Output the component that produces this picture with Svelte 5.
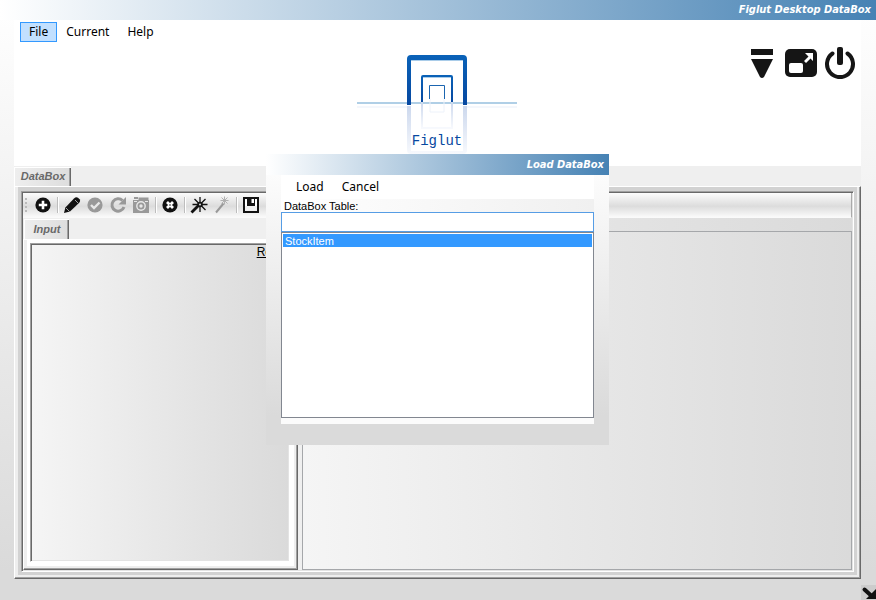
<script>
  let tableName = $state('');
  const tables = ['StockItem'];
</script>

{#snippet glyph(name)}
  <svg width="18" height="18" viewBox="0 0 18 18" aria-hidden="true">
    {#if name === 'Add'}
      <circle cx="9" cy="9" r="7.6" /><path d="M9 4.8v8.4M4.8 9h8.4" stroke="#fff" stroke-width="2.6" />
    {:else if name === 'Edit'}
      <path d="M1 17l1.400-5.400L11 2.600q2-2 4-.8l1.800 1.800q1 1.600-.6 3.200L7 15.500z" /><path d="M3 12l3.500 3.500M12 4l3 3" stroke="#ddd" stroke-width=".7" />
    {:else if name === 'Accept'}
      <circle cx="9" cy="9" r="7.600" /><path d="M5 9l3 3 5.500-5.500" stroke="#e8e8e8" stroke-width="2.400" fill="none" />
    {:else if name === 'Refresh'}
      <path d="M13.500 4.500A6.200 6.200 0 1 0 15 11" stroke="#999" stroke-width="3" fill="none" /><path d="M17 1v7.500H9.500z" />
    {:else if name === 'Snapshot'}
      <path d="M1 4h16v13H1zM2 1h4v2H2zM6.500 1.500h10V4h-10z" /><path d="M2 5.500h3M13 5.500h3" stroke="#e8e8e8" /><circle cx="9" cy="10" r="4.200" fill="none" stroke="#e8e8e8" stroke-width="1.400" /><circle cx="9" cy="10" r="1.700" fill="#e8e8e8" />
    {:else if name === 'Delete'}
      <circle cx="9" cy="9" r="7.600" /><path d="M6 6l6 6M12 6l-6 6" stroke="#fff" stroke-width="2.800" /><circle cx="9" cy="9" r=".8" />
    {:else if name === 'Magic'}
      <path d="M1.500 16.500L9 9" stroke="#111" stroke-width="2.800" /><path d="M10 1v15M2.500 8.500h15M4.500 3l11 11M15.500 3L9 9.500" stroke="#111" stroke-width="1.300" /><circle cx="10" cy="8.500" r="2.800" /><circle cx="10" cy="8.500" r="1" fill="#ddd" />
    {:else if name === 'Wand'}
      <path d="M3 16.500L10.500 7.500" stroke="#999" stroke-width="2" /><path d="M11.500 .5v8M7.500 4.500h8M8.500 1.500l6 6M14.500 1.500l-6 6" stroke="#aaa" stroke-width=".9" />
    {:else}
      <path d="M1 1h16v16H1z" /><path d="M3 3h2v7h8V3h2v12H3z" fill="#fff" /><path d="M3 10h12v5H3z" fill="#eee" /><path d="M5 1h8v8H5z" /><path d="M9.500 3H12v4H9.500z" fill="#fff" />
    {/if}
  </svg>
{/snippet}

{#snippet tool(name, off = false)}
  <button class="tool" class:off disabled={off} aria-label={name}>{@render glyph(name)}</button>
{/snippet}

<div class="window">
  <header class="titlebar">Figlut Desktop DataBox</header>

  <main>
    <section class="banner">
      <nav class="menu">
        <button class="active">File</button>
        <button>Current</button>
        <button>Help</button>
      </nav>
      <svg class="logo" width="160" height="100" viewBox="0 0 160 100" role="img" aria-label="Figlut logo">
        <defs>
          <linearGradient id="fade" x1="0" y1="0" x2="0" y2="1">
            <stop offset="0" stop-color="#ccd8ed" /><stop offset="1" stop-color="#f7f9fd" />
          </linearGradient>
          <linearGradient id="line" x1="0" y1="0" x2="0" y2="1">
            <stop offset="0" stop-color="#0a62b8" /><stop offset="1" stop-color="#0748a0" />
          </linearGradient>
        </defs>
        <path d="M0 48h160" stroke="#b0cfe6" stroke-width="2" /><path d="M0 52h160" stroke="#f4f7fc" stroke-width="2" />
        <path d="M50 51h60v48H50z" fill="#fff" />
        <path d="M50 51h4v45h52V51h4v44q0 4-4 4H54q-4 0-4-4z" fill="url(#fade)" />
        <path d="M65 47v26h30V47" stroke="url(#fade)" stroke-width="2" fill="none" />
        <path d="M73 44v13h14V44" stroke="#edf2fa" fill="none" />
        <path d="M54 5h52v33H54z" fill="#fff" />
        <path d="M50 50V4q0-4 4-4h52q4 0 4 4v46h-4V5H54v45z" fill="url(#line)" />
        <path d="M54 5.500h52" stroke="#a9cce9" />
        <path d="M64 47V22q0-2 2-2h28q2 0 2 2v25h-2V22H66v25z" fill="url(#line)" />
        <path d="M66 22.500h28" stroke="#a9cce9" />
        <path d="M72.500 44V30.500h15V44" stroke="#1b65b0" fill="none" />
        <text x="80" y="90" text-anchor="middle">Figlut</text>
      </svg>
      <div class="controls">
        <button aria-label="Minimize">
          <svg width="32" height="32" viewBox="0 0 32 32"><path d="M5 2h22v6H5zM5 12h22L18 30q-2 2-4 0z" /></svg>
        </button>
        <button aria-label="Restore">
          <svg width="32" height="32" viewBox="0 0 32 32"><rect y="2" width="32" height="28" rx="5" /><rect x="4" y="16" width="14" height="10" rx="2" fill="#fff" /><path d="M20 6h8v8l-2.500-2.500L21 16l-2-2 4.500-4.500z" fill="#fff" /></svg>
        </button>
        <button aria-label="Exit">
          <svg width="32" height="32" viewBox="0 0 32 32"><path d="M8.500 6.500A13 13 0 1 0 23.500 6.500" fill="none" stroke="#151515" stroke-width="4" stroke-linecap="round" /><rect x="13" width="6" height="18" rx="2" /></svg>
        </button>
      </div>
    </section>

    <div class="tabs"><button class="tab wide">DataBox</button></div>
    <div class="raised">
      <div class="rim">
        <div class="sunken workspace">
          <div class="toolbar" role="toolbar" aria-label="Record tools">
            <i class="grip"></i>
            {@render tool('Add')}<i class="sep"></i>
            {@render tool('Edit')}{@render tool('Accept', true)}{@render tool('Refresh', true)}{@render tool('Snapshot', true)}<i class="sep"></i>
            {@render tool('Delete')}<i class="sep"></i>
            {@render tool('Magic')}{@render tool('Wand', true)}<i class="sep"></i>
            {@render tool('Save')}
          </div>
          <div class="split">
            <div class="left">
              <div class="tabs inner"><button class="tab">Input</button></div>
              <div class="raised">
                <div class="page">
                  <div class="sunken form"><a href="#reset">Reset</a></div>
                </div>
              </div>
            </div>
            <div class="right"></div>
          </div>
        </div>
      </div>
    </div>
  </main>

  <svg class="resize" width="15" height="15" viewBox="0 0 15 15" aria-hidden="true"><path d="M3.500 4.500l6 5.500" stroke="#111" stroke-width="4" stroke-linecap="round" /><path d="M15 4v10H5z" /></svg>

  <div class="dialog" role="dialog" aria-label="Load DataBox">
    <header class="titlebar">Load DataBox</header>
    <div class="body">
      <nav class="menu">
        <button>Load</button>
        <button>Cancel</button>
      </nav>
      <label for="table">DataBox Table:</label>
      <input id="table" type="text" bind:value={tableName} />
      <ul role="listbox" aria-label="Tables">
        {#each tables as t}
          <li role="option" aria-selected="true">{t}</li>
        {/each}
      </ul>
    </div>
  </div>
</div>

<style>
  .window, .window * { box-sizing: border-box; }
  .window {
    position: relative;
    display: flex;
    flex-direction: column;
    min-height: 100vh;
    background: linear-gradient(#fff, #dadada 95%);
    color: #000;
    font: 11px/15px "Liberation Sans", Arial, sans-serif;
  }
  button {
    margin: 0;
    padding: 0;
    border: 0;
    background: none;
    color: inherit;
    font: inherit;
  }
  svg { display: block; }
  .titlebar {
    height: 20px;
    padding-right: 5px;
    background: linear-gradient(90deg, #fff, #4682b4);
    color: #fff;
    font: italic bold 11px/20px "DejaVu Sans Condensed", "DejaVu Sans", Verdana, sans-serif;
    text-align: right;
  }
  main {
    flex: 1;
    display: flex;
    flex-direction: column;
    padding: 0 15px 21px 14px;
  }
  .banner {
    display: grid;
    grid-template-columns: 1fr auto 1fr;
    height: 146px;
    padding-right: 1px;
    background: #fff;
  }
  .menu {
    display: flex;
    align-items: flex-start;
    padding: 2px 0 0 6px;
    font: 12px/18px "Noto Sans", "Open Sans", sans-serif;
  }
  .menu button {
    height: 20px;
    padding: 0 8px;
    border: 1px solid transparent;
  }
  .menu .active { border-color: #3399ff; background: #c2e0ff; }
  .logo { margin-top: 35px; }
  .logo text { font: 14px "Liberation Mono", "Courier New", monospace; fill: #0748a0; }
  .controls {
    display: flex;
    justify-content: flex-end;
    align-items: flex-start;
    gap: 7px;
    padding: 27px 4px 0 0;
    fill: #151515;
  }
  .tabs { height: 20px; padding-top: 1px; background: #efefef; }
  .tab {
    display: block;
    height: 100%;
    width: 45px;
    border: 1px solid #fff;
    border-width: 1px 0 0 1px;
    box-shadow: inset -1px 0 #696969, inset -2px 0 #a0a0a0;
    padding-bottom: 2px;
    background: linear-gradient(90deg, #eee, #ddd);
    color: #696969;
    font: italic bold 11px/16px "Liberation Sans", Arial, sans-serif;
  }
  .tab.wide { width: 57px; }
  .raised {
    flex: 1;
    display: flex;
    border: 1px solid;
    border-color: #fff #696969 #696969 #fff;
    box-shadow: inset -1px -1px #a0a0a0;
    padding: 0 3px 3px;
    background: #eee;
  }
  .rim { flex: 1; display: flex; padding: 4px 3px 3px; background: #d2d2d2; }
  .sunken {
    flex: 1;
    border: 1px solid;
    border-color: #a0a0a0 #fff #fff #a0a0a0;
    box-shadow: inset 1px 1px #696969, inset -1px -1px #e3e3e3;
    padding: 1px;
  }
  .workspace {
    display: flex;
    flex-direction: column;
    background: linear-gradient(90deg, #fafafa, #dadada);
  }
  .toolbar {
    display: flex;
    align-items: center;
    height: 25px;
    padding-left: 2px;
    border-bottom: 1px solid #fafafa;
    border-right: 1px solid #aaa;
    background: linear-gradient(#fcfcfc, #dcdcdc 55%, #fafafa);
  }
  .grip {
    width: 6px;
    height: 15px;
    background: repeating-linear-gradient(#bbb 0 2px, transparent 2px 4px) 0 0 / 2px 100% no-repeat;
  }
  .tool { display: grid; place-items: center; width: 23px; height: 24px; fill: #111; }
  .tool.off { fill: #999; }
  .sep { width: 6px; height: 16px; background: linear-gradient(90deg, #bdbdbd 50%, #fff 50%) 3px 0 / 2px 100% no-repeat; }
  .split { flex: 1; display: flex; gap: 4px; }
  .left { display: flex; flex-direction: column; width: 275px; }
  .inner { height: 21px; padding-left: 1px; }
  .page { flex: 1; display: flex; padding: 3px 4px 4px 3px; background: #fff; }
  .form {
    display: flex;
    justify-content: flex-end;
    align-items: flex-start;
    background: linear-gradient(90deg, #f5f5f5, #dadada);
    font-size: 12px;
  }
  .form a { color: #000; }
  .right {
    flex: 1;
    margin-top: 13px;
    border: 1px solid #a5a7aa;
    background: linear-gradient(90deg, #f5f5f5, #dadada);
  }
  .resize { position: absolute; right: 0; bottom: 0; background: #ccc; fill: #111; }
  .dialog {
    position: absolute;
    top: 50%;
    left: 50%;
    width: 343px;
    margin: -146px 0 0 -172px;
    background: linear-gradient(#fff, #dadada 90%);
  }
  .dialog .titlebar { height: 21px; line-height: 22px; }
  .body {
    display: flex;
    flex-direction: column;
    margin: 0 15px 21px;
    border-bottom: 6px solid #fbfbfb;
    background: linear-gradient(90deg, #fff, #f0f0f0);
  }
  .body .menu { height: 24px; background: #fff; }
  .body label { height: 13px; padding-left: 3px; }
  .body input {
    width: 100%;
    height: 20px;
    padding: 0 3px;
    border: 1px solid #569de5;
    background: #fff;
    font: inherit;
    outline: none;
  }
  ul {
    height: 186px;
    margin: 0;
    padding: 1px;
    border: 1px solid #828790;
    background: #fff;
    list-style: none;
  }
  li { height: 13px; padding: 0 2px; background: #3399ff; color: #fff; }
</style>
